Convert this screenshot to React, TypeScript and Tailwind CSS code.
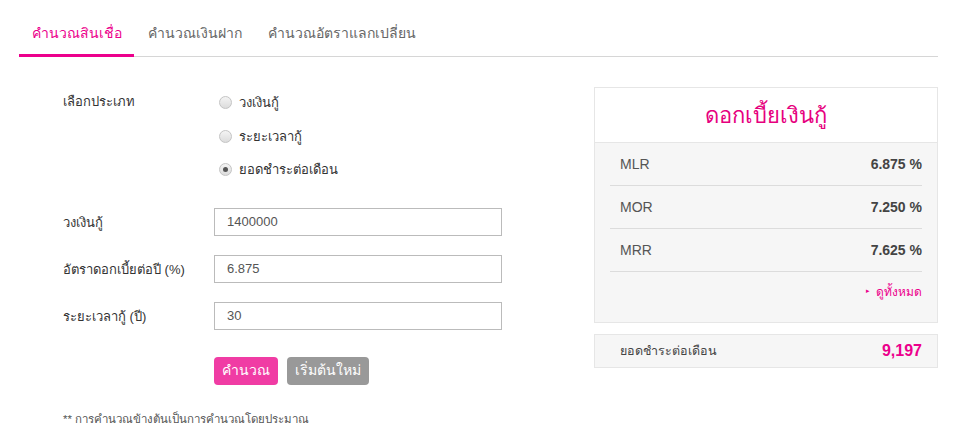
import React from "react";

const font = { fontFamily: '"Liberation Sans", "Noto Sans", sans-serif' };

function Radio({ checked, label }: { checked?: boolean; label: string }) {
  return (
    <div className="flex items-center h-[33.5px]">
      <span className="w-[13px] h-[13px] rounded-full border border-[#c4c4c4] bg-gradient-to-b from-[#f4f4f4] to-[#dcdcdc] flex items-center justify-center ml-[5px]">
        {checked && <span className="w-[5px] h-[5px] rounded-full bg-[#555]" />}
      </span>
      <span className="ml-[7px] text-[13px] text-[#333]">{label}</span>
    </div>
  );
}

function Field({ label, value }: { label: string; value: string }) {
  return (
    <div className="flex items-start">
      <div className="w-[151px] text-[13px] text-[#333] pt-[5px]">{label}</div>
      <input
        readOnly
        value={value}
        className="w-[288px] h-[28px] border border-[#bbb] px-[12px] text-[13px] text-[#555] outline-none"
        style={font}
      />
    </div>
  );
}

function RateRow({ name, value }: { name: string; value: string }) {
  return (
    <div className="h-[43px] border-b border-[#dcdcdc] flex items-center justify-between pl-[10px]">
      <span className="text-[14px] text-[#555]">{name}</span>
      <span className="text-[14px] font-bold text-[#444]">{value}</span>
    </div>
  );
}

export default function App() {
  return (
    <div className="w-[960px] h-[439px] bg-white overflow-hidden px-[19px] pt-[20px]" style={font}>
      <div className="w-[919px] flex border-b border-[#d6d6d6]">
        <div className="w-[115px] text-center pt-[1px] pb-[9px] border-b-[3px] border-[#ec008c] mb-[-1px] text-[14px] leading-[24px] text-[#ec008c]">
          คำนวณสินเชื่อ
        </div>
        <div className="w-[121px] text-center pt-[1px] pb-[9px] text-[14px] leading-[24px] text-[#666]">คำนวณเงินฝาก</div>
        <div className="w-[173px] text-center pt-[1px] pb-[9px] text-[14px] leading-[24px] text-[#666]">คำนวณอัตราแลกเปลี่ยน</div>
      </div>

      <div className="flex w-[919px]">
        <div className="w-[575px] pl-[44px] pt-[29px]">
          <div className="flex">
            <div className="w-[151px] text-[13px] text-[#333] pt-[6px]">เลือกประเภท</div>
            <div className="flex flex-col">
              <Radio label="วงเงินกู้" />
              <Radio label="ระยะเวลากู้" />
              <Radio checked label="ยอดชำระต่อเดือน" />
            </div>
          </div>
          <div className="mt-[21px] flex flex-col gap-[19px]">
            <Field label="วงเงินกู้" value="1400000" />
            <Field label="อัตราดอกเบี้ยต่อปี (%)" value="6.875" />
            <Field label="ระยะเวลากู้ (ปี)" value="30" />
          </div>
          <div className="flex gap-[9px] ml-[151px] mt-[27px]">
            <button className="w-[64px] h-[28px] rounded-[4px] bg-[#f03ca4] text-white text-[14px]">คำนวณ</button>
            <button className="w-[82px] h-[28px] rounded-[4px] bg-[#999] text-white text-[14px]">เริ่มต้นใหม่</button>
          </div>
          <div className="mt-[26px] text-[11.5px] text-[#555]">** การคำนวณข้างต้นเป็นการคำนวณโดยประมาณ</div>
        </div>

        <div className="w-[344px] pt-[30px]">
          <div className="border border-[#e6e6e6]">
            <div className="h-[55px] bg-white border-b border-[#e6e6e6] flex items-center justify-center text-[22px] text-[#e6007e]">
              ดอกเบี้ยเงินกู้
            </div>
            <div className="bg-[#f6f6f6] px-[15px] pb-[11px]">
              <RateRow name="MLR" value="6.875 %" />
              <RateRow name="MOR" value="7.250 %" />
              <RateRow name="MRR" value="7.625 %" />
              <div className="flex justify-end items-center h-[39px] text-[12px] text-[#ec008c]">
                <span className="text-[7px] mr-[6px]">▸</span>ดูทั้งหมด
              </div>
            </div>
          </div>
          <div className="mt-[11px] border border-[#e6e6e6] bg-[#f6f6f6] h-[34px] flex items-center justify-between pl-[25px] pr-[15px]">
            <span className="text-[12.5px] text-[#444]">ยอดชำระต่อเดือน</span>
            <span className="text-[16px] font-bold text-[#ec008c]">9,197</span>
          </div>
        </div>
      </div>
    </div>
  );
}
